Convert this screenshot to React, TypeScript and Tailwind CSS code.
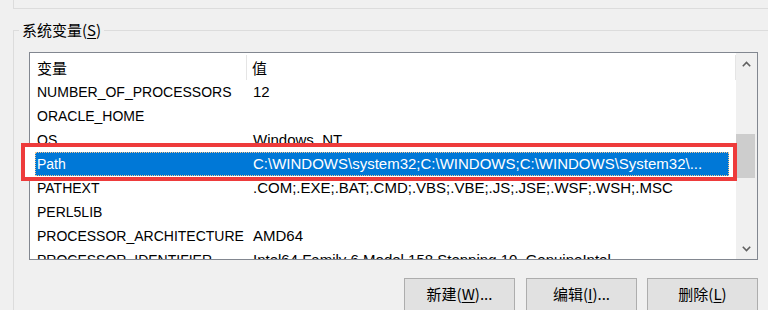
import React from "react"

type Row = { name: string; value: string; selected?: boolean }

const rows: Row[] = [
  { name: "NUMBER_OF_PROCESSORS", value: "12" },
  { name: "ORACLE_HOME", value: "" },
  { name: "OS", value: "Windows_NT" },
  { name: "Path", value: "C:\\WINDOWS\\system32;C:\\WINDOWS;C:\\WINDOWS\\System32\\...", selected: true },
  { name: "PATHEXT", value: ".COM;.EXE;.BAT;.CMD;.VBS;.VBE;.JS;.JSE;.WSF;.WSH;.MSC" },
  { name: "PERL5LIB", value: "" },
  { name: "PROCESSOR_ARCHITECTURE", value: "AMD64" },
  { name: "PROCESSOR_IDENTIFIER", value: "Intel64 Family 6 Model 158 Stepping 10, GenuineIntel" },
]

const Chevron = ({ up }: { up?: boolean }) => (
  <svg width="9" height="6" viewBox="0 0 9 6" className={up ? "" : "rotate-180"}>
    <path d="M0.8 5.2 L4.5 1.5 L8.2 5.2" fill="none" stroke="#606060" strokeWidth="1.6" />
  </svg>
)

const Button = ({ label, mnemonic, tail }: { label: string; mnemonic: string; tail: string }) => (
  <div className="w-[111px] h-[34px] shrink-0 flex justify-center pt-[5px] bg-[#e1e1e1] border border-[#adadad] leading-[20px]">
    <span>
      {label}(<span className="underline underline-offset-2">{mnemonic}</span>){tail}
    </span>
  </div>
)

export default function App() {
  return (
    <div className="w-[768px] h-[310px] overflow-hidden bg-[#f0f0f0] text-[15px] text-black font-['Noto_Sans_CJK_SC',sans-serif]">
      <div className="ml-[13px] h-[9px] border-l border-b border-[#dcdcdc]" />

      <fieldset className="ml-[13px] mt-[11px] w-[800px] h-[300px] border-l border-t border-[#dcdcdc]">
        <legend className="ml-[5px] px-[3px] leading-[20px]">
          系统变量(<span className="underline underline-offset-2">S</span>)
        </legend>

        <div className="relative ml-[15px] mt-[12px] w-[729px]">
          <div className="flex h-[208px] border border-[#828790] bg-white overflow-hidden leading-[20px]">
            <div className="w-[706px] shrink-0">
              <div className="flex h-[27px] items-center pt-[2px]">
                <div className="w-[217px] h-full pl-[7px] flex items-center border-r border-[#e5e5e5]">变量</div>
                <div className="flex-1 h-full pl-[5px] flex items-center border-r border-[#e5e5e5]">值</div>
              </div>
              <div className="font-['Liberation_Sans','Noto_Sans_CJK_SC',sans-serif]">
                {rows.map((r) => (
                  <div
                    key={r.name}
                    className={
                      r.selected
                        ? "relative z-[2] ml-[5px] w-[694px] h-[24px] flex items-center bg-[#0078d7] text-white outline outline-1 outline-dotted outline-[#f3c58e] -outline-offset-1"
                        : "ml-[5px] w-[694px] h-[24px] flex items-center"
                    }
                  >
                    <div className="w-[212px] pl-[2px] text-[14px] whitespace-nowrap">{r.name}</div>
                    <div className="flex-1 pl-[6px] text-[15px] whitespace-nowrap overflow-hidden">{r.value}</div>
                  </div>
                ))}
              </div>
            </div>
            <div className="w-[21px] shrink-0 flex flex-col bg-[#f0f0f0]">
              <div className="h-[21px] flex items-center justify-center">
                <Chevron up />
              </div>
              <div className="h-[60px]" />
              <div className="h-[44px] w-[19px] bg-[#cdcdcd]" />
              <div className="flex-1" />
              <div className="h-[21px] flex items-center justify-center">
                <Chevron />
              </div>
            </div>
          </div>

          <div className="absolute left-[-8px] top-[91px] w-[716px] h-[38px] border-4 border-[#ee3b3b] bg-white" />

          <div className="mt-[18px] flex justify-end gap-[10px]">
            <div className="mr-[1px]">
              <Button label="新建" mnemonic="W" tail="..." />
            </div>
            <Button label="编辑" mnemonic="I" tail="..." />
            <Button label="删除" mnemonic="L" tail="" />
          </div>
        </div>
      </fieldset>
    </div>
  )
}
